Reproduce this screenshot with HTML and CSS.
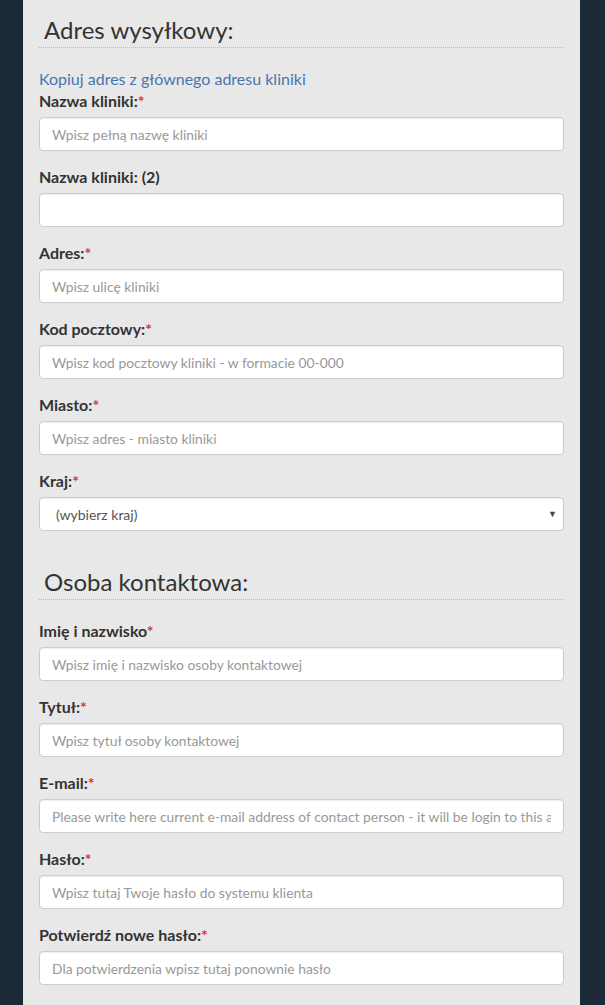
FILE: index.html
```html
<!DOCTYPE html>
<html>
<head>
	<meta name="viewport" content="width=device-width, initial-scale=1.0">
	<title>Adres wysyłkowy</title>
	<link rel="stylesheet" href="styles.css">
</head>
<body>

	<div class="panel">

		<div class="section">
			<h2 class="section-title">Adres wysyłkowy:</h2>
			<a class="copy-link" href="#">Kopiuj adres z głównego adresu kliniki</a>

			<div class="form-group">
				<label>Nazwa kliniki:<span class="req">*</span></label>
				<input type="text" placeholder="Wpisz pełną nazwę kliniki">
			</div>
			<div class="form-group">
				<label>Nazwa kliniki: (2)</label>
				<input type="text">
			</div>
			<div class="form-group">
				<label>Adres:<span class="req">*</span></label>
				<input type="text" placeholder="Wpisz ulicę kliniki">
			</div>
			<div class="form-group">
				<label>Kod pocztowy:<span class="req">*</span></label>
				<input type="text" placeholder="Wpisz kod pocztowy kliniki - w formacie 00-000">
			</div>
			<div class="form-group">
				<label>Miasto:<span class="req">*</span></label>
				<input type="text" placeholder="Wpisz adres - miasto kliniki">
			</div>
			<div class="form-group">
				<label>Kraj:<span class="req">*</span></label>
				<div class="select-wrap">
					<select>
						<option>(wybierz kraj)</option>
					</select>
				</div>
			</div>
		</div>

		<div class="section">
			<h2 class="section-title">Osoba kontaktowa:</h2>

			<div class="form-group">
				<label>Imię i nazwisko<span class="req">*</span></label>
				<input type="text" placeholder="Wpisz imię i nazwisko osoby kontaktowej">
			</div>
			<div class="form-group">
				<label>Tytuł:<span class="req">*</span></label>
				<input type="text" placeholder="Wpisz tytuł osoby kontaktowej">
			</div>
			<div class="form-group">
				<label>E-mail:<span class="req">*</span></label>
				<input type="text" placeholder="Please write here current e-mail address of contact person - it will be login to this account">
			</div>
			<div class="form-group">
				<label>Hasło:<span class="req">*</span></label>
				<input type="password" placeholder="Wpisz tutaj Twoje hasło do systemu klienta">
			</div>
			<div class="form-group">
				<label>Potwierdź nowe hasło:<span class="req">*</span></label>
				<input type="password" placeholder="Dla potwierdzenia wpisz tutaj ponownie hasło">
			</div>
		</div>

	</div>

</body>
</html>
```

FILE: styles.css
```css
body{
	margin: 0;
	padding: 0 25px 0 23px;
	background-color: #1b2a36;
	font-family: Lato, "Open Sans", sans-serif;
	color: #333;
}

.panel{
	background-color: #e8e8e8;
	padding: 15px 16px 20px 16px;
	min-height: 1005px;
	box-sizing: border-box;
}

.section + .section{
	margin-top: 36px;
}

.section-title{
	margin: 0 0 21px 0;
	padding: 0 0 2px 5px;
	font-size: 24px;
	font-weight: normal;
	line-height: 30px;
	color: #333;
	border-bottom: 1px dotted #b9b9b9;
}

.copy-link{
	display: block;
	margin-bottom: 2px;
	font-size: 16px;
	line-height: 20px;
	color: #4776b0;
	text-decoration: none;
}

.form-group{
	margin-bottom: 16px;
}

label{
	display: block;
	margin-bottom: 6px;
	font-size: 16px;
	font-weight: bold;
	line-height: 20px;
	color: #333;
}

.req{
	color: #e0303a;
}

input, select{
	display: block;
	width: 100%;
	height: 34px;
	box-sizing: border-box;
	padding: 6px 12px;
	font-family: Lato, "Open Sans", sans-serif;
	font-size: 13.85px;
	color: #555;
	background-color: #fff;
	border: 1px solid #ccc;
	border-radius: 4px;
	box-shadow: inset 0 1px 1px rgba(0,0,0,0.075);
	outline: none;
}

input::placeholder{
	color: #999;
}

.select-wrap{
	position: relative;
}

select{
	-webkit-appearance: none;
	appearance: none;
	padding-left: 16px;
	font-size: 14px;
	color: #555;
}

.select-wrap::after{
	content: "\25BC";
	position: absolute;
	right: 7px;
	top: 11px;
	font-size: 9px;
	color: #444;
	pointer-events: none;
}
```
